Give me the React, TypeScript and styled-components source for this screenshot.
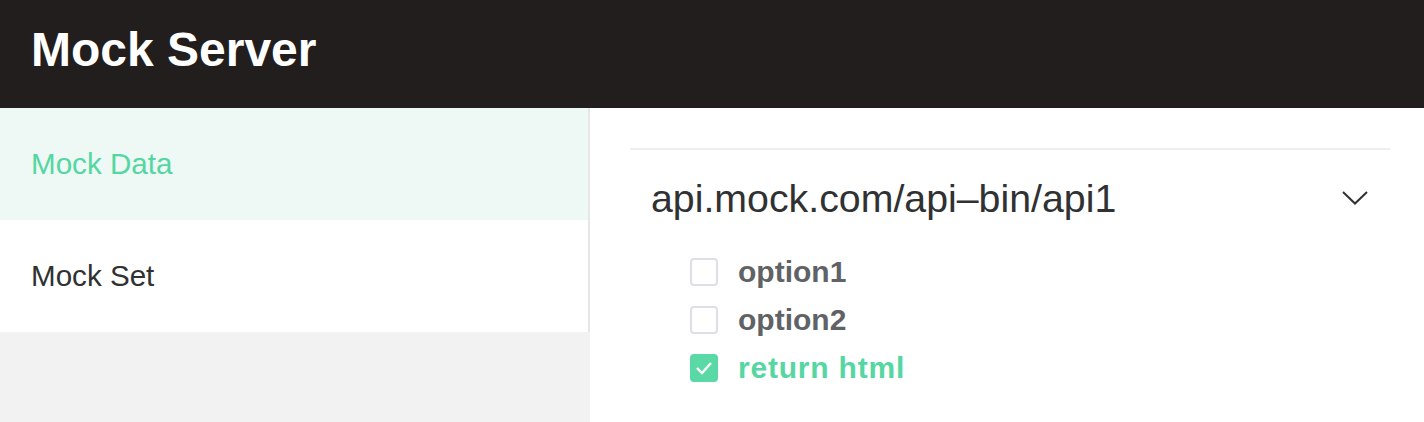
import React from "react";
import styled, { createGlobalStyle } from "styled-components";

const GlobalStyle = createGlobalStyle`
  html, body { margin: 0; padding: 0; background: #ffffff; }
  body { font-family: "Liberation Sans", Arial, sans-serif; }
  * { box-sizing: border-box; }
`;

const Page = styled.div`
  width: 1424px;
  height: 422px;
  display: flex;
  flex-direction: column;
  overflow: hidden;
`;

const Header = styled.header`
  height: 108px;
  flex: 0 0 108px;
  background: #221e1e;
  display: flex;
  align-items: center;
  padding: 0 0 10px 31px;
`;

const Title = styled.h1`
  margin: 0;
  color: #ffffff;
  font-size: 48px;
  font-weight: 700;
  letter-spacing: 0;
`;

const Body = styled.div`
  flex: 1;
  display: flex;
`;

const Sidebar = styled.aside`
  width: 590px;
  flex: 0 0 590px;
  background: #f2f2f2;
`;

const Menu = styled.ul`
  list-style: none;
  margin: 0;
  padding: 0;
  background: #ffffff;
  border-right: 2px solid #e6e6e6;
`;

const MenuItem = styled.li<{ $active?: boolean }>`
  height: 112px;
  display: flex;
  align-items: center;
  padding-left: 31px;
  font-size: 29.6px;
  color: ${(p) => (p.$active ? "#55d6a2" : "#303133")};
  background: ${(p) => (p.$active ? "#eef8f4" : "#ffffff")};
`;

const Main = styled.main`
  flex: 1;
  padding: 40px 34px 0 40px;
`;

const Collapse = styled.section`
  border-top: 2px solid #ebeef5;
`;

const CollapseHeader = styled.div`
  height: 96px;
  display: flex;
  align-items: center;
  justify-content: space-between;
  padding: 0 22px 0 21px;
  font-size: 39.3px;
  color: #303133;
`;

const CollapseContent = styled.div`
  padding-top: 2px;
  padding-left: 60px;
  display: flex;
  flex-direction: column;
`;

const OptionRow = styled.label`
  height: 48px;
  display: flex;
  align-items: center;
  gap: 20px;
  cursor: pointer;
`;

const Box = styled.span<{ $checked?: boolean }>`
  width: 28px;
  height: 28px;
  border-radius: 4px;
  border: 2px solid ${(p) => (p.$checked ? "#5ad8a6" : "#dcdfe6")};
  background: ${(p) => (p.$checked ? "#5ad8a6" : "#ffffff")};
  display: flex;
  align-items: center;
  justify-content: center;
`;

const OptionText = styled.span<{ $checked?: boolean }>`
  font-size: 30px;
  font-weight: 700;
  color: ${(p) => (p.$checked ? "#55d6a2" : "#606266")};
  letter-spacing: ${(p) => (p.$checked ? "0.8px" : "0")};
`;

const Chevron = () => (
  <svg width="26" height="14" viewBox="0 0 26 14" fill="none">
    <path d="M1 1 L13 12.5 L25 1" stroke="#303133" strokeWidth="2" />
  </svg>
);

const Check = () => (
  <svg width="18" height="14" viewBox="0 0 18 14" fill="none">
    <path d="M2 7 L7 12 L16 2" stroke="#ffffff" strokeWidth="2.4" />
  </svg>
);

const options = [
  { label: "option1", checked: false },
  { label: "option2", checked: false },
  { label: "return html", checked: true },
];

export default function App() {
  return (
    <>
      <GlobalStyle />
      <Page>
        <Header>
          <Title>Mock Server</Title>
        </Header>
        <Body>
          <Sidebar>
            <Menu>
              <MenuItem $active>Mock Data</MenuItem>
              <MenuItem>Mock Set</MenuItem>
            </Menu>
          </Sidebar>
          <Main>
            <Collapse>
              <CollapseHeader>
                <span>api.mock.com/api–bin/api1</span>
                <Chevron />
              </CollapseHeader>
              <CollapseContent>
                {options.map((o) => (
                  <OptionRow key={o.label}>
                    <Box $checked={o.checked}>{o.checked && <Check />}</Box>
                    <OptionText $checked={o.checked}>{o.label}</OptionText>
                  </OptionRow>
                ))}
              </CollapseContent>
            </Collapse>
          </Main>
        </Body>
      </Page>
    </>
  );
}
